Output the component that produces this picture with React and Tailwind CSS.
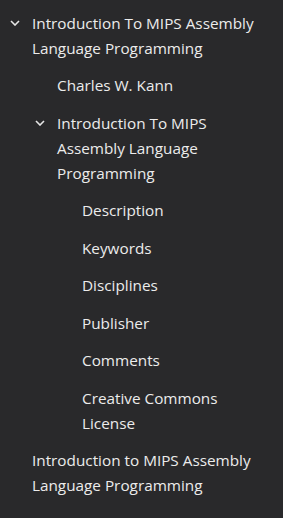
import { useState } from "react";

const tree = [
  {
    label: "Introduction To MIPS Assembly Language Programming",
    children: [
      { label: "Charles W. Kann" },
      {
        label: "Introduction To MIPS Assembly Language Programming",
        children: [
          { label: "Description" },
          { label: "Keywords" },
          { label: "Disciplines" },
          { label: "Publisher" },
          { label: "Comments" },
          { label: "Creative Commons License" },
        ],
      },
    ],
  },
  { label: "Introduction to MIPS Assembly Language Programming" },
];

const Chevron = () => (
  <svg width="10" height="6" viewBox="0 0 10 6" className="block">
    <path d="M1 1 L5 5 L9 1" fill="none" stroke="#e6e6e6" strokeWidth="1.6" />
  </svg>
);

const pads = ["pl-[32px]", "pl-[57px]", "pl-[82px]"];
const chevronPads = ["left-[10px]", "left-[35px]", "left-[60px]"];

const Node = ({ node, depth }) => {
  const [open, setOpen] = useState(true);
  const hasKids = !!node.children;

  return (
    <li>
      <div
        className={`relative py-[6.25px] pr-5 ${pads[depth]} cursor-pointer`}
        onClick={() => hasKids && setOpen(!open)}
      >
        {hasKids && (
          <span className={`absolute top-[15.5px] ${chevronPads[depth]}`}>
            <Chevron />
          </span>
        )}
        <span className="text-[15.3px] leading-[25px] text-[#ececec]">{node.label}</span>
      </div>
      {hasKids && open && (
        <ul>
          {node.children.map((c, i) => (
            <Node key={i} node={c} depth={depth + 1} />
          ))}
        </ul>
      )}
    </li>
  );
};

export default function App() {
  return (
    <div
      className="w-[283px] h-[518px] bg-[#29292b] pt-[4.25px] overflow-hidden"
      style={{ fontFamily: '"Open Sans", "Noto Sans", sans-serif' }}
    >
      <ul>
        {tree.map((n, i) => (
          <Node key={i} node={n} depth={0} />
        ))}
      </ul>
    </div>
  );
}
